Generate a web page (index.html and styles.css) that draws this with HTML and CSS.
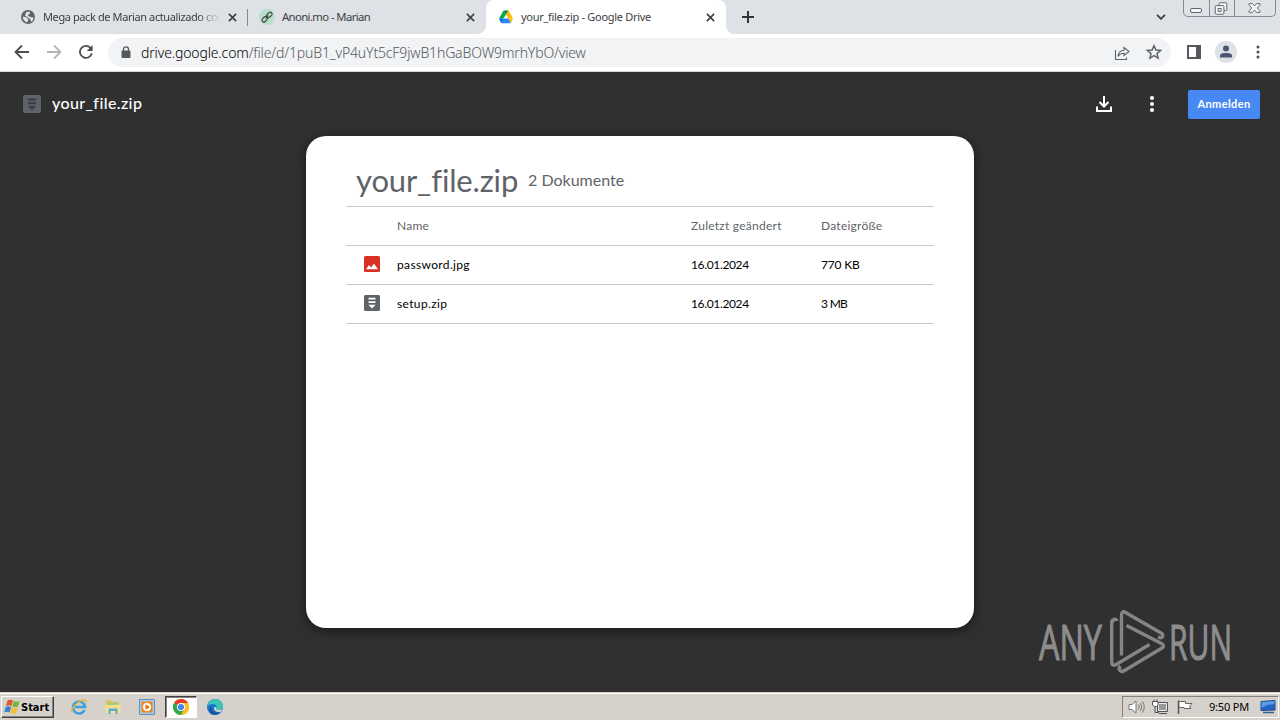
FILE: index.html
```html
<!DOCTYPE html>
<html lang="de">
<head>
    <meta charset="UTF-8">
    <title>your_file.zip - Google Drive</title>
    <link rel="stylesheet" href="styles.css">
</head>
<body>

    <!-- tabs -->
    <div class="tabstrip">
        <div class="tab">
            <svg class="favicon" viewBox="0 0 16 16"><circle cx="8" cy="8" r="7" fill="#5f6368"/><path d="M2.8 7.6 6.5 8.3 8.2 10v1.6L6.8 13.6Q3 12 2.8 7.6ZM6 3.3 9.6 2.5 10 4.6 7.6 6.2 10.8 8.2 13.6 8.5Q13.6 11.2 11.3 13L10.4 10.4 7.5 8 5 6.8Z" fill="#dee1e6"/></svg>
            <span class="tab-title fade t1">Mega pack de Marian actualizado con</span>
            <svg class="close" viewBox="0 0 10 10"><path d="M1 1 9 9M9 1 1 9"/></svg>
        </div>
        <div class="tab sep">
            <svg class="favicon" viewBox="0 0 16 16"><circle cx="8" cy="8" r="8" fill="#b9dfcb"/><g fill="none" stroke="#44504b" stroke-width="1.2"><rect x="7.2" y="4.1" width="6.3" height="3.8" rx="1.9" transform="rotate(-45 10.3 6)"/><rect x="2.6" y="8.3" width="6.3" height="3.8" rx="1.9" transform="rotate(-45 5.8 10.2)"/><path d="m6.5 9.5 3-3"/></g></svg>
            <span class="tab-title t2">Anoni.mo - Marian</span>
            <svg class="close" viewBox="0 0 10 10"><path d="M1 1 9 9M9 1 1 9"/></svg>
        </div>
        <div class="tab active">
            <svg class="favicon" viewBox="0 0 16 16"><path fill="#00ac47" d="M5.5 1.5 1 9.6h4.4L8 5.4Z"/><path fill="#00832d" d="M5.5 1.5h5L8 5.5Z"/><path fill="#ffba00" d="M10.5 1.5 15 9.6h-4.5L8 5.5Z"/><path fill="#2684fc" d="M5.4 9.6h5.1l2.4 4.6H3.3Z"/><path fill="#0066da" d="M1 9.6h4.4l-2.1 4.6Z"/><path fill="#ffba00" d="M10.5 9.6H15l-2.1 4.6Z"/></svg>
            <span class="tab-title t3">your_file.zip - Google Drive</span>
            <svg class="close" viewBox="0 0 10 10"><path d="M1 1 9 9M9 1 1 9"/></svg>
        </div>
        <svg class="new-tab" viewBox="0 0 12 12"><path d="M6 0v12M0 6h12"/></svg>
        <svg class="tab-search" viewBox="0 0 10 6"><path d="m1 .8 4 4 4-4"/></svg>
        <div class="window-buttons">
            <svg width="25" height="16" viewBox="0 0 25 16"><rect x="6.5" y="8.5" width="11" height="4" rx="1.5"/></svg>
            <svg width="25" height="16" viewBox="0 0 25 16"><rect x="9.5" y="2.5" width="8" height="8" rx="1"/><rect x="5.5" y="5.5" width="9" height="9" rx="1"/><rect x="8.5" y="8.5" width="3" height="3"/></svg>
            <svg width="41" height="16" viewBox="0 0 41 16"><path d="M14.5 3.5h3.2l2.3 2.3 2.3-2.3h3.2v1.7L22.8 8l2.7 2.8v1.7h-3.2L20 10.2l-2.3 2.3h-3.2v-1.7L17.2 8l-2.7-2.8Z"/></svg>
        </div>
    </div>

    <!-- address bar -->
    <div class="toolbar">
        <svg class="nav" viewBox="0 0 16 16"><path d="M15 8H2M8 1.5 1.5 8 8 14.5"/></svg>
        <svg class="nav off" viewBox="0 0 16 16"><path d="M1 8h13M8 1.5 14.5 8 8 14.5"/></svg>
        <svg class="nav" viewBox="0 0 16 16"><path d="M13.8 9.2A6 6 0 1 1 12.2 3.7L13.5 5"/><path class="solid" d="M14.6 1v6H8.8Z"/></svg>
        <div class="omnibox">
            <svg class="lock" viewBox="0 0 10 13"><rect x=".5" y="4.5" width="9" height="7.5" rx="1" fill="#55595e"/><path d="M2.5 5V3.3a2.5 2.5 0 0 1 5 0V5" fill="none" stroke="#55595e" stroke-width="1.3"/></svg>
            <span class="url"><b>drive.google.com</b>/file/d/1puB1_vP4uYt5cF9jwB1hGaBOW9mrhYbO/view</span>
            <svg class="share" viewBox="0 0 16 16"><path d="M1.5 5v9.5h11v-2M4 11.500c.5-4 2.500-6 6-6.200V2.500l5 4-5 4V8.200c-3 0-4.500.8-6 3.300Z"/></svg>
            <svg class="star" viewBox="0 0 16 16"><path d="m8 1.7 1.9 4.4 4.7.4-3.600 3.100 1.100 4.600L8 11.700l-4.100 2.500L5 9.600 1.400 6.500l4.700-.4Z"/></svg>
        </div>
        <svg class="panel" viewBox="0 0 14 14"><path d="M0 0h14v14H0ZM2 2v10h7V2Z" fill="#55595e" fill-rule="evenodd"/></svg>
        <svg class="avatar" viewBox="0 0 22 22"><circle cx="11" cy="11" r="11" fill="#dee1e6"/><circle cx="11" cy="7.5" r="3" fill="#4a5672"/><path d="M5 16.500v-1.800C5 12.500 8 12 11 12s6 .5 6 2.700v1.800Z" fill="#4a5672"/></svg>
        <svg class="dots" viewBox="0 0 4 14"><circle cx="2" cy="2" r="1.5"/><circle cx="2" cy="7" r="1.5"/><circle cx="2" cy="12" r="1.5"/></svg>
    </div>

    <!-- drive viewer -->
    <div class="viewer">
        <div class="viewer-bar">
            <svg class="zip" viewBox="0 0 18 18"><rect width="18" height="18" rx="2" fill="#5f6368"/><path d="M5 3.500h8v2H5ZM5 7.200h8v2H5ZM5 11h8l-4 4.200Z" fill="#393c40"/></svg>
            <span class="viewer-name">your_file.zip</span>
            <svg class="download" viewBox="0 0 16 16"><path d="M8 0v10M3.500 6 8 10.500 12.500 6M1 10.500V15h14v-4.500"/></svg>
            <svg class="more" viewBox="0 0 4 16"><circle cx="2" cy="2" r="2"/><circle cx="2" cy="8" r="2"/><circle cx="2" cy="14" r="2"/></svg>
            <a class="login">Anmelden</a>
        </div>
        <div class="card">
            <div class="card-head">
                <span class="card-title">your_file.zip</span>
                <span class="card-count">2 Dokumente</span>
            </div>
            <div class="row head">
                <span></span>
                <span>Name</span>
                <span>Zuletzt geändert</span>
                <span>Dateigröße</span>
            </div>
            <div class="row">
                <svg viewBox="0 0 16 16"><rect width="16" height="16" rx="1.5" fill="#d93025"/><path d="M2 13.300 5 9l2 2.500L10 7.800l4 5.500Z" fill="#fff"/></svg>
                <span class="f-name">password.jpg</span>
                <span class="f-date">16.01.2024</span>
                <span class="f-size">770 KB</span>
            </div>
            <div class="row">
                <svg viewBox="0 0 16 16"><rect width="16" height="16" rx="1.5" fill="#5f6368"/><path d="M4.500 2.700h7v1.700h-7ZM4.500 6.300h7V8h-7ZM4.300 9.800h7.400L8 13.500Z" fill="#fff"/></svg>
                <span class="f-name">setup.zip</span>
                <span class="f-date">16.01.2024</span>
                <span class="f-size mb">3 MB</span>
            </div>
        </div>
        <div class="watermark">
            <svg width="200" height="64" viewBox="0 0 200 64">
                <text x="2" y="50" transform="translate(0 50) scale(1 1.4) translate(0 -50)" textLength="63" lengthAdjust="spacingAndGlyphs">ANY</text>
                <text x="132" y="50" transform="translate(0 50) scale(1 1.4) translate(0 -50)" textLength="63" lengthAdjust="spacingAndGlyphs">RUN</text>
                <path d="M79.700 11c0-3-5-2-5 2v39c0 3 2 4 4.500 2.500L112.500 34.500M84.500 45.500V5c0-3 1.500-4 4-2.500L124 23c4 2.500 1 6-3 4M83.500 56c-3 3 0 7 4 4.500L125 38c2-1.300 2-3-.5-4.500L89.500 15.500"/>
            </svg>
        </div>
    </div>

    <!-- taskbar -->
    <div class="taskbar">
        <div class="start">
            <svg viewBox="0 0 16 16"><path d="M3.500 1.500q3-1.500 5.500 0L7.400 7Q5 5.500 2 7Z" fill="#e5532d"/><path d="M9.700 2q2.500 1.300 6 0L14 7.500q-3 1.200-5.800-.1Z" fill="#79b43c"/><path d="M1.700 7.900q2.800-1.300 5.400.2L5.600 13.400q-2.300-1.300-5.400-.1Z" fill="#3b82cb"/><path d="M8 8.400q2.700 1.300 5.800.1L12.200 14q-3 1.300-5.700-.1Z" fill="#f2bd32"/></svg>
            <span>Start</span>
        </div>
        <div class="launch">
            <svg viewBox="0 0 16 16"><path d="M13.500 11A6 6 0 1 1 14 8H4" fill="none" stroke="#3da1df" stroke-width="2.6"/><path d="M1 13.500C-1 9 10-1 15 1.500c1 .7.500 2 .1 2.700" fill="none" stroke="#e8b830" stroke-width="1.3"/></svg>
        </div>
        <div class="launch">
            <svg viewBox="0 0 16 16"><path d="M1 3V1.500h5L7.500 3H14v11H1Z" fill="#e6bd52"/><path d="M3 3.500h10V7H3Z" fill="#9fd17c"/><path d="M0 6h16l-1 8H1Z" fill="#f7e08c"/><path d="M3.500 15V9.500h9V15h-2v-3h-5v3Z" fill="#59a9d7"/></svg>
        </div>
        <div class="launch">
            <svg viewBox="0 0 16 16"><path d="M.5.5h15v15H.5Z" fill="#a9cbe8" stroke="#5e91bd"/><rect x="2.5" y="2.5" width="11" height="11" rx="1" fill="#f08216"/><circle cx="8" cy="8" r="4.2" fill="#fff"/><path d="m6.500 5.200 4.500 2.800-4.500 2.800Z" fill="#e36d0b"/></svg>
        </div>
        <div class="launch pressed">
            <svg viewBox="0 0 16 16"><circle cx="8" cy="8" r="8" fill="#fbc116"/><path d="M8 8 1.070 4A8 8 0 0 1 14.930 4Z" fill="#e33b2e"/><path d="M8 8 1.070 4A8 8 0 0 0 8 16l3.400-6Z" fill="#2da94f"/><path d="M8 4h6.930A8 8 0 0 1 8 16l3.500-6Z" fill="#fbc116"/><circle cx="8" cy="8" r="4" fill="#fff"/><circle cx="8" cy="8" r="3.1" fill="#4285f4"/></svg>
        </div>
        <div class="launch">
            <svg viewBox="0 0 16 16"><circle cx="8" cy="8" r="8" fill="#1679c9"/><path d="M.2 7C1 2.500 4.500 0 8 0c5 0 8 3.500 8 7 0 3-2.500 4-5 4-2 0-2-.8-1.500-1.700C10.500 7.500 9 5 6 5 3.500 5 1.500 5.800.2 7Z" fill="#3cc5b5"/><path d="M5 7c-1 4 2 7.500 8 6.500-3 3.500-9 3-10.500-.5C1.500 10.500 3 8 5 7Z" fill="#1457a5"/><path d="M9.500 9.300C8.500 11 11 12 15.500 10l-1.700 2.700C10 14 7 12 7 9.200c0-1.200 2-2 2.500.1Z" fill="#d6d2cb"/></svg>
        </div>
        <div class="tray">
            <svg viewBox="0 0 18 16"><path d="M1 5.500h3L8 2v12l-4-3.500H1Z" fill="#fff" stroke="#777"/><path d="M10.500 5.500q1.500 2.500 0 5M12.500 4q2.500 4 0 8M14.500 2.500q3.500 5.500 0 11" fill="none" stroke="#777"/></svg>
            <svg viewBox="0 0 18 16"><path d="M5.500 3.500h10v9h-10Z" fill="#999" stroke="#555"/><path d="M6.500 4.500h8v7h-8Z" fill="none" stroke="#eee"/><path d="M7 14.500h8M3 8v5.500h4" fill="none" stroke="#555"/><path d="M2 .5v2M5 .5v2M.5 2.500h5.500V6L4.500 7.500h-2L.5 6Z" fill="#fff" stroke="#555"/></svg>
            <svg viewBox="0 0 18 16"><path d="M2.500 15V1.500" stroke="#555" stroke-width="1.5"/><path d="M3 2.500h6.500v2H16L13.500 7 15 9.500H8v-1H3Z" fill="#fff" stroke="#666"/></svg>
            <span class="clock">9:50 PM</span>
            <svg class="desk" viewBox="0 0 16 14"><path d="M1 1.500 15 .5v9.500L1 10.500Z" fill="#2765c4" stroke="#164886"/><path d="M1.500 2 14.500 1v3Q7 4 1.500 8Z" fill="#5c9ce8"/><path d="M3 12.500h11" stroke="#31608e" stroke-width="1.5"/></svg>
        </div>
    </div>

</body>
</html>
```

FILE: styles.css
```css
* { box-sizing: border-box; }
body {
    margin: 0;
    width: 1280px;
    height: 720px;
    overflow: hidden;
    display: flex;
    flex-direction: column;
    font-family: "Noto Sans", sans-serif;
    background: #303030;
}
svg { display: block; flex: none; }
span, a { white-space: nowrap; }

/* tabs */
.tabstrip { display: flex; height: 34px; background: #dee1e6; flex: none; }
.tab { display: flex; align-items: center; height: 34px; width: 239px; padding: 0 11px 0 12px; font-size: 11px; color: #3c4043; }
.tab:first-child { width: 247px; padding: 0 10px 0 20px; }
.tab.sep { background: linear-gradient(#858a90, #858a90) 0 9px / 1px 17px no-repeat; }
.tab.active {
    width: 240px;
    position: relative;
    background: #fff;
    border-radius: 8px 8px 0 0;
}
.tab.active::before, .tab.active::after {
    content: "";
    position: absolute;
    bottom: 0;
    width: 8px;
    height: 8px;
}
.tab.active::before { left: -8px; background: radial-gradient(circle at 0 0, #dee1e6 7.5px, #fff 8px); }
.tab.active::after { right: -8px; background: radial-gradient(circle at 100% 0, #dee1e6 7.5px, #fff 8px); }
.favicon { width: 16px; height: 16px; margin-right: 7px; }
.tab-title { flex: 1; min-width: 0; margin-right: 8px; line-height: 16px; }
.fade { -webkit-mask-image: linear-gradient(90deg, #000 155px, transparent 177px); }
.t1 { letter-spacing: -0.4px; }
.t2 { letter-spacing: -0.6px; font-size: 11.3px; }
.t3 { letter-spacing: -0.3px; }
.close { width: 9px; height: 9px; fill: none; stroke: #3c4043; stroke-width: 1.8; }
.new-tab { width: 12px; height: 12px; margin: 11px 0 0 16px; stroke: #303338; stroke-width: 2; }
.tab-search { width: 10px; height: 6px; margin: 14px 17px 0 auto; fill: none; stroke: #3c4043; stroke-width: 1.8; }
.window-buttons { display: flex; height: 17px; width: 93px; margin-right: 4px; border: 1px solid #858a92; border-top: 0; border-radius: 0 0 5px 5px; }
.window-buttons svg { fill: #f4f5f7; stroke: #60646b; }
.window-buttons svg + svg { border-left: 1px solid #858a92; }

/* address bar */
.toolbar { display: flex; align-items: center; height: 38px; flex: none; padding: 0 20px 0 14px; background: #fff; border-bottom: 1px solid #d5d7da; }
.nav { width: 16px; height: 16px; margin: -1px 16px 0 0; fill: none; stroke: #4b4f54; stroke-width: 1.8; }
.nav .solid { fill: #4b4f54; stroke: none; }
.nav.off { stroke: #b3b5b8; }
.omnibox { display: flex; align-items: center; width: 1063px; height: 29px; margin-left: -2px; padding: 0 9px 0 13px; border-radius: 15px; background: #f1f3f4; }
.omnibox .lock { width: 10px; height: 13px; margin: -1px 10px 0 0; }
.url { flex: 1; font-size: 14px; font-weight: 300; letter-spacing: -0.15px; color: #54585d; }
.url b { font-weight: 300; color: #000; }
.share, .star { width: 16px; height: 16px; margin-left: 16px; fill: none; stroke: #5f6368; stroke-width: 1.1; }
.star { margin-top: -1px; stroke-width: 1.5; }
.panel { width: 14px; height: 14px; margin: -1px 0 0 16px; }
.avatar { width: 22px; height: 22px; margin: -1px 0 0 14px; }
.dots { width: 4px; height: 14px; margin: -1px 0 0 auto; fill: #4b4f54; }

/* viewer */
.viewer { position: relative; height: 620px; flex: none; background: #303030; font-family: Lato, sans-serif; }
.viewer-bar { display: flex; align-items: center; height: 64px; padding: 0 20px 0 23px; color: #fff; }
.zip { width: 18px; height: 18px; margin-right: 11px; }
.viewer-name { margin-top: -3px; font-size: 16px; font-weight: 500; letter-spacing: 0.4px; }
.download { width: 16px; height: 16px; margin-left: auto; fill: none; stroke: #fff; stroke-width: 2; }
.more { width: 4px; height: 16px; margin: 0 34px 0 38px; fill: #fff; }
.login { width: 72px; height: 29px; line-height: 28px; border-radius: 2px; background: #4788f4; font-size: 11px; font-weight: 700; letter-spacing: 0.4px; text-align: center; }
.card { width: 668px; height: 492px; margin: 0 auto; padding: 0 40px; border-radius: 20px; background: #fff; box-shadow: 0 3px 12px rgba(0, 0, 0, 0.5); color: #000; }
.card-head { display: flex; align-items: center; height: 70px; padding: 17px 0 0 10px; color: #5f6368; }
.card-title { font-size: 31px; width: 172px; letter-spacing: -0.15px; }
.card-count { font-size: 16px; }
.row { display: grid; grid-template-columns: 51px 294px 130px 1fr; align-items: center; height: 39px; padding-bottom: 2px; border-top: 1px solid #c8c8c8; font-size: 12px; }
.row:last-child { height: 40px; border-bottom: 1px solid #c8c8c8; }
.row.head { color: #5f6368; letter-spacing: 0.25px; }
.row svg { width: 16px; height: 16px; margin-left: 18px; }
.f-name { letter-spacing: 0.35px; }
.f-date { letter-spacing: -0.35px; }
.f-size { letter-spacing: -0.2px; }
.mb { letter-spacing: -0.7px; }
.watermark { position: absolute; left: 1037px; top: 538px; }
.watermark svg { overflow: visible; }
.watermark text { font: 35px "Open Sans", sans-serif; fill: #8d8d8d; stroke: #8d8d8d; stroke-width: 0.8; }
.watermark path { fill: none; stroke: #858585; stroke-width: 3.4; stroke-linejoin: round; }

/* taskbar */
.taskbar { display: flex; align-items: center; height: 28px; padding: 1px 1px 0; background: #d6d2cb; border-top: 1px solid #d6d2cb; box-shadow: inset 0 1px #fff; font-size: 11px; }
.start { display: flex; align-items: center; gap: 1px; width: 53px; height: 22px; margin-right: 8px; padding-left: 2px; border: 1px solid; border-color: #fff #404040 #404040 #fff; box-shadow: inset -1px -1px #85827c; font: 700 11px "DejaVu Sans Condensed", "DejaVu Sans", sans-serif; letter-spacing: 0; }
.start svg { width: 16px; height: 16px; }
.launch { display: flex; align-items: center; justify-content: center; width: 34px; height: 22px; }
.launch svg { width: 16px; height: 16px; }
.pressed { width: 32px; margin: 0 1px; background: #fff; border: 1px solid; border-color: #404040 #fff #fff #404040; box-shadow: inset 1px 1px #85827c; }
.tray { display: flex; align-items: center; width: 157px; height: 22px; margin-left: auto; padding: 0 2px 0 5px; border: 1px solid; border-color: #85827c #fff #fff #85827c; }
.tray svg { width: 18px; height: 16px; margin-right: 6px; }
.clock { margin-left: 9px; margin-top: -1px; letter-spacing: -0.2px; }
.tray .desk { width: 16px; height: 14px; margin: 0 0 0 auto; }
```
